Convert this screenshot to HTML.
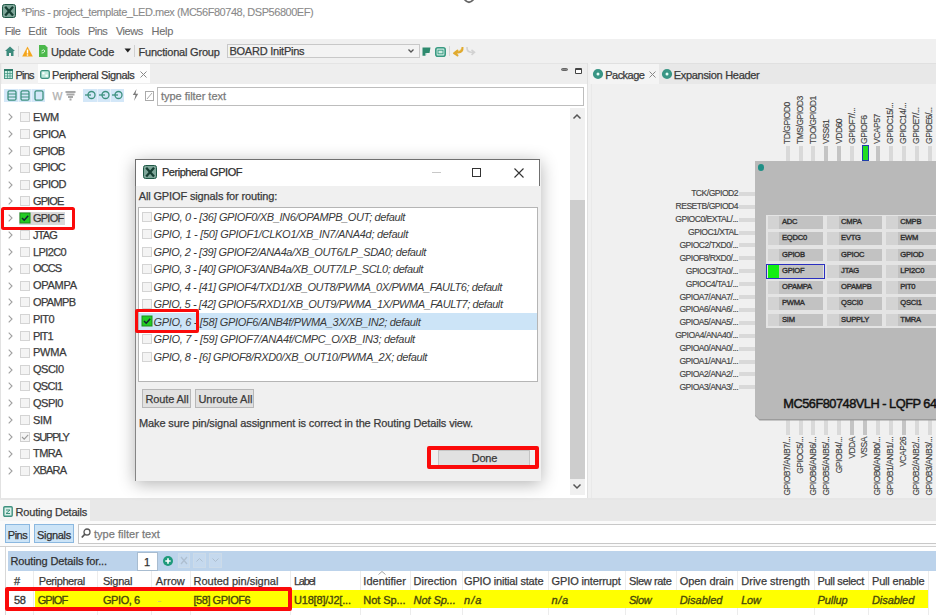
<!DOCTYPE html><html><head><meta charset="utf-8"><style>
*{margin:0;padding:0;box-sizing:border-box}
html,body{width:936px;height:615px;overflow:hidden;background:#fff;position:relative;font-family:"Liberation Sans",sans-serif}
.t{position:absolute;white-space:pre;-webkit-text-stroke:0.25px currentColor}
.r{position:absolute}
.i{font-style:italic;-webkit-text-stroke-width:0}
svg{position:absolute;overflow:visible}
</style></head><body><div class="r" style="left:0px;top:0px;width:936px;height:22px;background:#fff"></div>
<div class="r" style="left:2px;top:4px;width:14.2px;height:14.2px;background:#7ea699;border:1.8px solid #1f5846;border-radius:2.5px"></div>
<svg style="left:2px;top:4px" width="14" height="14"><path d="M3.2 2.8 L11 11.4 M11 2.8 L3.2 11.4" stroke="#173f33" stroke-width="2.3"/></svg>
<div class="t " style="left:21.2px;top:6.59px;font-size:11.0px;line-height:11.0px;color:#8a8a8a;letter-spacing:-0.466px;-webkit-text-stroke-width:0.1px">*Pins - project_template_LED.mex (MC56F80748, DSP56800EF)</div>
<svg style="left:462px;top:-4px" width="14" height="8"><path d="M2.5 3.5 Q7 9 11.5 3.5" stroke="#666" stroke-width="1.8" fill="none"/></svg>
<div class="t " style="left:4.8px;top:26.09px;font-size:11.0px;line-height:11.0px;color:#6f6f6f;letter-spacing:-0.584px;-webkit-text-stroke-width:0.1px">File</div>
<div class="t " style="left:28.2px;top:26.09px;font-size:11.0px;line-height:11.0px;color:#6f6f6f;letter-spacing:-0.117px;-webkit-text-stroke-width:0.1px">Edit</div>
<div class="t " style="left:55.6px;top:26.09px;font-size:11.0px;line-height:11.0px;color:#6f6f6f;letter-spacing:-0.358px;-webkit-text-stroke-width:0.1px">Tools</div>
<div class="t " style="left:88.0px;top:26.09px;font-size:11.0px;line-height:11.0px;color:#6f6f6f;letter-spacing:-0.527px;-webkit-text-stroke-width:0.1px">Pins</div>
<div class="t " style="left:115.9px;top:26.09px;font-size:11.0px;line-height:11.0px;color:#6f6f6f;letter-spacing:-0.431px;-webkit-text-stroke-width:0.1px">Views</div>
<div class="t " style="left:151.5px;top:26.09px;font-size:11.0px;line-height:11.0px;color:#6f6f6f;letter-spacing:-0.256px;-webkit-text-stroke-width:0.1px">Help</div>
<div class="r" style="left:0px;top:39px;width:936px;height:24px;background:#f0f0f0"></div>
<svg style="left:5px;top:46px" width="10" height="10"><path d="M0 5 L5 0.5 L10 5 L8.5 5 L8.5 10 L6 10 L6 7 L4 7 L4 10 L1.5 10 L1.5 5 Z" fill="#3d8b7d"/></svg>
<div class="r" style="left:18px;top:46px;width:1px;height:11px;background:#d8d8d8"></div>
<svg style="left:22px;top:46px" width="11" height="11"><path d="M5.5 0.5 L10.8 10.5 L0.2 10.5 Z" fill="#f4a51c"/><rect x="4.8" y="3.5" width="1.4" height="4" fill="#fff"/><rect x="4.8" y="8.3" width="1.4" height="1.4" fill="#fff"/></svg>
<svg style="left:39px;top:45px" width="9" height="12"><path d="M0 0 L6 0 L8.5 2.5 L8.5 12 L0 12 Z" fill="#4cb84c"/><path d="M2.5 6 Q4.5 3.5 6 6 Q4.5 8.5 2.5 8" stroke="#d8f5d8" stroke-width="1" fill="none"/></svg>
<div class="t " style="left:51.0px;top:47.09px;font-size:11.0px;line-height:11.0px;color:#3a3a3a;letter-spacing:-0.139px;">Update Code</div>
<svg style="left:124px;top:48px" width="8" height="6"><path d="M0.5 0.5 L7 0.5 L3.75 4.5 Z" fill="#222"/></svg>
<div class="r" style="left:134px;top:45px;width:1px;height:12px;background:#d0d0d0"></div>
<div class="t " style="left:138.5px;top:47.09px;font-size:11.0px;line-height:11.0px;color:#3a3a3a;letter-spacing:-0.199px;">Functional Group</div>
<div class="r" style="left:226.5px;top:44px;width:193px;height:14px;background:#f3f3f3;border:1px solid #c8c8c8"></div>
<div class="t " style="left:229.4px;top:46.39px;font-size:11.0px;line-height:11.0px;color:#3a3a3a;letter-spacing:-0.232px;">BOARD InitPins</div>
<svg style="left:408px;top:49px" width="6" height="4"><path d="M0.5 0.5 L3 3 L5.5 0.5" stroke="#555" stroke-width="1.3" fill="none"/></svg>
<svg style="left:422px;top:47px" width="9" height="9"><path d="M0.5 0.5 H8.5 L7.5 6 H3.5 V8.8 H0.5 Z" fill="#2e8a6e"/><path d="M3.6 7.8 L5 6.5" stroke="#9cc" stroke-width="0.8"/></svg>
<svg style="left:435px;top:46.5px" width="11" height="10"><rect x="0.8" y="0.8" width="9.4" height="8.4" rx="2" fill="#cdebe2" stroke="#3a9a82" stroke-width="1.6"/><rect x="3" y="3.2" width="5" height="3.6" fill="none" stroke="#3a9a82" stroke-width="0.9"/></svg>
<div class="r" style="left:449px;top:46px;width:1px;height:10px;background:#d8d8d8"></div>
<svg style="left:453px;top:46px" width="11" height="10"><path d="M9.5 1 Q10 6 5 6.5 L3 6.5 L4.5 4.5 L1 7.2 L4.5 9.5 L3 7.8" stroke="#e0aa30" stroke-width="2" fill="#f5d78a" stroke-linejoin="round"/></svg>
<svg style="left:466px;top:46px" width="10" height="10"><path d="M1 1 Q0.8 6 5 6.2 L7.5 6.2 M5.5 3.8 L8.5 6.2 L5.5 8.8" stroke="#d2d2d2" stroke-width="1.6" fill="none"/></svg>
<div class="r" style="left:0px;top:63px;width:588px;height:435px;background:#fff"></div>
<div class="r" style="left:0px;top:63px;width:588px;height:21px;background:#eeeeee"></div>
<div class="r" style="left:1.5px;top:64px;width:36px;height:19.5px;background:#f2f2f2"></div>
<div class="r" style="left:0px;top:63px;width:588px;height:1px;background:#e4e4e4"></div>
<div class="r" style="left:0px;top:63px;width:1px;height:435px;background:#e2e2e2"></div>
<div class="r" style="left:587px;top:63px;width:1px;height:435px;background:#e0e0e0"></div>
<div class="r" style="left:37.5px;top:63.8px;width:112.6px;height:19.5px;background:#fdfdfd"></div>
<svg style="left:4px;top:69px" width="9" height="10"><rect x="0.5" y="0.5" width="8" height="9" fill="#c9eee2" stroke="#3e917f" stroke-width="0.9"/><rect x="0" y="0" width="9" height="2" fill="#2f7d6b"/><path d="M0.5 4.5 H8.5 M0.5 7 H8.5 M3.5 2 V9.5 M6 2 V9.5" stroke="#3e917f" stroke-width="0.7"/></svg>
<div class="t " style="left:15.4px;top:69.69px;font-size:11.0px;line-height:11.0px;color:#3a3a3a;letter-spacing:-0.752px;">Pins</div>
<svg style="left:40px;top:69.5px" width="10" height="9"><rect x="0.7" y="0.7" width="8.6" height="7.6" rx="1.5" fill="#bfeadd" stroke="#3e917f" stroke-width="1.3"/><rect x="2.3" y="2.3" width="2.2" height="2" fill="#fff"/><rect x="5.5" y="4.6" width="2.2" height="2" fill="#fff"/></svg>
<div class="t " style="left:52.0px;top:69.69px;font-size:11.0px;line-height:11.0px;color:#3a3a3a;letter-spacing:-0.377px;">Peripheral Signals</div>
<svg style="left:139.5px;top:70.5px" width="7" height="7"><path d="M0.5 0.5 L6.5 6.5 M6.5 0.5 L0.5 6.5" stroke="#888" stroke-width="1"/></svg>
<div class="r" style="left:561px;top:67.6px;width:7px;height:3.2px;background:#888;border:1px solid #666;border-radius:2px"></div>
<div class="r" style="left:575.2px;top:67.6px;width:6.8px;height:6.4px;background:#fff;border:1.3px solid #444;border-top-width:2.2px;border-radius:1px"></div>
<div class="r" style="left:4px;top:88.5px;width:41px;height:13px;background:#d3e7f8"></div>
<div class="r" style="left:17.7px;top:88.5px;width:0.8px;height:13px;background:#e8f2fb"></div>
<div class="r" style="left:31.4px;top:88.5px;width:0.8px;height:13px;background:#e8f2fb"></div>
<svg style="left:6.5px;top:89.5px" width="10" height="11"><rect x="1" y="0.8" width="8" height="9.4" rx="1.5" fill="none" stroke="#3e917f" stroke-width="1.3"/><path d="M1 4 H9 M1 7 H9" stroke="#3e917f" stroke-width="1"/></svg>
<svg style="left:20.2px;top:89.5px" width="10" height="11"><rect x="1" y="0.8" width="8" height="9.4" rx="1.5" fill="none" stroke="#3e917f" stroke-width="1.3"/><path d="M1 4 H9 M1 7 H9" stroke="#3e917f" stroke-width="1"/></svg>
<svg style="left:33.9px;top:89.5px" width="10" height="11"><rect x="1" y="0.8" width="8" height="9.4" rx="1.5" fill="none" stroke="#3e917f" stroke-width="1.3"/></svg>
<div class="t " style="left:52.5px;top:91.11px;font-size:10.5px;line-height:10.5px;color:#b0b0b0;">W</div>
<svg style="left:65px;top:91px" width="11" height="10"><path d="M0.5 1 H10.5 M1.5 3.5 H9.5 M3 6 H8 M4.5 8.5 H6.5" stroke="#a8a8a8" stroke-width="1.8"/></svg>
<div class="r" style="left:83px;top:88.5px;width:41px;height:13px;background:#d3e7f8"></div>
<div class="r" style="left:96.7px;top:88.5px;width:0.8px;height:13px;background:#e8f2fb"></div>
<div class="r" style="left:110.4px;top:88.5px;width:0.8px;height:13px;background:#e8f2fb"></div>
<svg style="left:85.0px;top:90px" width="12" height="10"><circle cx="6.5" cy="5" r="3.5" fill="none" stroke="#3e917f" stroke-width="1.3"/><path d="M0 5 H6" stroke="#3e917f" stroke-width="1.3"/></svg>
<svg style="left:98.7px;top:90px" width="12" height="10"><circle cx="6.5" cy="5" r="3.5" fill="none" stroke="#3e917f" stroke-width="1.3"/><path d="M0 5 H6" stroke="#3e917f" stroke-width="1.3"/></svg>
<svg style="left:112.4px;top:90px" width="12" height="10"><circle cx="6.5" cy="5" r="3.5" fill="none" stroke="#3e917f" stroke-width="1.3"/><path d="M0 5 H6" stroke="#3e917f" stroke-width="1.3"/></svg>
<svg style="left:132px;top:89px" width="7" height="12"><path d="M4.5 0 L0.8 6 L3.5 6 L2 12 L6.2 4.8 L3.5 4.8 Z" fill="#7d7d7d"/></svg>
<svg style="left:145px;top:89.5px" width="9" height="11"><rect x="0.5" y="1.5" width="8" height="9" fill="none" stroke="#aaa"/><path d="M2 9 L7 3" stroke="#aaa"/></svg>
<div class="r" style="left:157px;top:87px;width:427px;height:18.5px;background:#fff;border:1px solid #bdbdbd"></div>
<div class="t " style="left:161.0px;top:91.19px;font-size:11.0px;line-height:11.0px;color:#7a7a7a;letter-spacing:-0.026px;">type filter text</div>
<div class="r" style="left:569.5px;top:108px;width:15px;height:387px;background:#f0f0f0"></div>
<div class="r" style="left:569.5px;top:200px;width:15px;height:279px;background:#cdcdcd"></div>
<svg style="left:573px;top:114px" width="8" height="5"><path d="M0.5 4.5 L4 1 L7.5 4.5" stroke="#555" stroke-width="1.5" fill="none"/></svg>
<svg style="left:573px;top:484px" width="8" height="5"><path d="M0.5 0.5 L4 4 L7.5 0.5" stroke="#555" stroke-width="1.5" fill="none"/></svg>
<svg style="left:8px;top:113.3px" width="5" height="8"><path d="M0.7 0.7 L4 4 L0.7 7.3" stroke="#a0a0a0" stroke-width="1.1" fill="none"/></svg>
<div class="r" style="left:20px;top:112.3px;width:10px;height:10px;background:#f4f4f4;border:1px solid #d4d4d4"></div>
<div class="t " style="left:33.0px;top:111.99px;font-size:11.0px;line-height:11.0px;color:#3a3a3a;letter-spacing:-0.33px;">EWM</div>
<svg style="left:8px;top:130.1px" width="5" height="8"><path d="M0.7 0.7 L4 4 L0.7 7.3" stroke="#a0a0a0" stroke-width="1.1" fill="none"/></svg>
<div class="r" style="left:20px;top:129.1px;width:10px;height:10px;background:#f4f4f4;border:1px solid #d4d4d4"></div>
<div class="t " style="left:33.0px;top:128.81px;font-size:11.0px;line-height:11.0px;color:#3a3a3a;letter-spacing:-0.489px;">GPIOA</div>
<svg style="left:8px;top:146.9px" width="5" height="8"><path d="M0.7 0.7 L4 4 L0.7 7.3" stroke="#a0a0a0" stroke-width="1.1" fill="none"/></svg>
<div class="r" style="left:20px;top:145.9px;width:10px;height:10px;background:#f4f4f4;border:1px solid #d4d4d4"></div>
<div class="t " style="left:33.0px;top:145.63px;font-size:11.0px;line-height:11.0px;color:#3a3a3a;letter-spacing:-0.689px;">GPIOB</div>
<svg style="left:8px;top:163.8px" width="5" height="8"><path d="M0.7 0.7 L4 4 L0.7 7.3" stroke="#a0a0a0" stroke-width="1.1" fill="none"/></svg>
<div class="r" style="left:20px;top:162.8px;width:10px;height:10px;background:#f4f4f4;border:1px solid #d4d4d4"></div>
<div class="t " style="left:33.0px;top:162.45px;font-size:11.0px;line-height:11.0px;color:#3a3a3a;letter-spacing:-0.691px;">GPIOC</div>
<svg style="left:8px;top:180.6px" width="5" height="8"><path d="M0.7 0.7 L4 4 L0.7 7.3" stroke="#a0a0a0" stroke-width="1.1" fill="none"/></svg>
<div class="r" style="left:20px;top:179.6px;width:10px;height:10px;background:#f4f4f4;border:1px solid #d4d4d4"></div>
<div class="t " style="left:33.0px;top:179.27px;font-size:11.0px;line-height:11.0px;color:#3a3a3a;letter-spacing:-0.491px;">GPIOD</div>
<svg style="left:8px;top:197.4px" width="5" height="8"><path d="M0.7 0.7 L4 4 L0.7 7.3" stroke="#a0a0a0" stroke-width="1.1" fill="none"/></svg>
<div class="r" style="left:20px;top:196.4px;width:10px;height:10px;background:#f4f4f4;border:1px solid #d4d4d4"></div>
<div class="t " style="left:33.0px;top:196.09px;font-size:11.0px;line-height:11.0px;color:#3a3a3a;letter-spacing:-0.889px;">GPIOE</div>
<svg style="left:8px;top:214.2px" width="5" height="8"><path d="M0.7 0.7 L4 4 L0.7 7.3" stroke="#a0a0a0" stroke-width="1.1" fill="none"/></svg>
<div class="r" style="left:18.75px;top:212px;width:46.2px;height:13px;background:#d9d9d9"></div>
<svg style="left:19.7px;top:212.8px" width="10" height="10"><rect x="0" y="0" width="10" height="10" fill="#22cc22" stroke="#1a8f1a" stroke-width="1"/><path d="M2 5 L4.2 7.2 L8.2 2.8" stroke="#123" stroke-width="1.5" fill="none"/></svg>
<div class="t " style="left:33.0px;top:212.91px;font-size:11.0px;line-height:11.0px;color:#3a3a3a;letter-spacing:-0.767px;">GPIOF</div>
<svg style="left:8px;top:231.0px" width="5" height="8"><path d="M0.7 0.7 L4 4 L0.7 7.3" stroke="#a0a0a0" stroke-width="1.1" fill="none"/></svg>
<div class="r" style="left:20px;top:230.0px;width:10px;height:10px;background:#f4f4f4;border:1px solid #d4d4d4"></div>
<div class="t " style="left:33.0px;top:229.73px;font-size:11.0px;line-height:11.0px;color:#3a3a3a;letter-spacing:-0.849px;">JTAG</div>
<svg style="left:8px;top:247.9px" width="5" height="8"><path d="M0.7 0.7 L4 4 L0.7 7.3" stroke="#a0a0a0" stroke-width="1.1" fill="none"/></svg>
<div class="r" style="left:20px;top:246.9px;width:10px;height:10px;background:#f4f4f4;border:1px solid #d4d4d4"></div>
<div class="t " style="left:33.0px;top:246.55px;font-size:11.0px;line-height:11.0px;color:#3a3a3a;letter-spacing:-0.617px;">LPI2C0</div>
<svg style="left:8px;top:264.7px" width="5" height="8"><path d="M0.7 0.7 L4 4 L0.7 7.3" stroke="#a0a0a0" stroke-width="1.1" fill="none"/></svg>
<div class="r" style="left:20px;top:263.7px;width:10px;height:10px;background:#f4f4f4;border:1px solid #d4d4d4"></div>
<div class="t " style="left:33.0px;top:263.37px;font-size:11.0px;line-height:11.0px;color:#3a3a3a;letter-spacing:-0.92px;">OCCS</div>
<svg style="left:8px;top:281.5px" width="5" height="8"><path d="M0.7 0.7 L4 4 L0.7 7.3" stroke="#a0a0a0" stroke-width="1.1" fill="none"/></svg>
<div class="r" style="left:20px;top:280.5px;width:10px;height:10px;background:#f4f4f4;border:1px solid #d4d4d4"></div>
<div class="t " style="left:33.0px;top:280.19px;font-size:11.0px;line-height:11.0px;color:#3a3a3a;letter-spacing:-0.273px;">OPAMPA</div>
<svg style="left:8px;top:298.3px" width="5" height="8"><path d="M0.7 0.7 L4 4 L0.7 7.3" stroke="#a0a0a0" stroke-width="1.1" fill="none"/></svg>
<div class="r" style="left:20px;top:297.3px;width:10px;height:10px;background:#f4f4f4;border:1px solid #d4d4d4"></div>
<div class="t " style="left:33.0px;top:297.01px;font-size:11.0px;line-height:11.0px;color:#3a3a3a;letter-spacing:-0.628px;">OPAMPB</div>
<svg style="left:8px;top:315.1px" width="5" height="8"><path d="M0.7 0.7 L4 4 L0.7 7.3" stroke="#a0a0a0" stroke-width="1.1" fill="none"/></svg>
<div class="r" style="left:20px;top:314.1px;width:10px;height:10px;background:#f4f4f4;border:1px solid #d4d4d4"></div>
<div class="t " style="left:33.0px;top:313.83px;font-size:11.0px;line-height:11.0px;color:#3a3a3a;letter-spacing:-0.559px;">PIT0</div>
<svg style="left:8px;top:332.0px" width="5" height="8"><path d="M0.7 0.7 L4 4 L0.7 7.3" stroke="#a0a0a0" stroke-width="1.1" fill="none"/></svg>
<div class="r" style="left:20px;top:331.0px;width:10px;height:10px;background:#f4f4f4;border:1px solid #d4d4d4"></div>
<div class="t " style="left:33.0px;top:330.65px;font-size:11.0px;line-height:11.0px;color:#3a3a3a;letter-spacing:-0.909px;">PIT1</div>
<svg style="left:8px;top:348.8px" width="5" height="8"><path d="M0.7 0.7 L4 4 L0.7 7.3" stroke="#a0a0a0" stroke-width="1.1" fill="none"/></svg>
<div class="r" style="left:20px;top:347.8px;width:10px;height:10px;background:#f4f4f4;border:1px solid #d4d4d4"></div>
<div class="t " style="left:33.0px;top:347.47px;font-size:11.0px;line-height:11.0px;color:#3a3a3a;letter-spacing:-0.234px;">PWMA</div>
<svg style="left:8px;top:365.6px" width="5" height="8"><path d="M0.7 0.7 L4 4 L0.7 7.3" stroke="#a0a0a0" stroke-width="1.1" fill="none"/></svg>
<div class="r" style="left:20px;top:364.6px;width:10px;height:10px;background:#f4f4f4;border:1px solid #d4d4d4"></div>
<div class="t " style="left:33.0px;top:364.29px;font-size:11.0px;line-height:11.0px;color:#3a3a3a;letter-spacing:-0.503px;">QSCI0</div>
<svg style="left:8px;top:382.4px" width="5" height="8"><path d="M0.7 0.7 L4 4 L0.7 7.3" stroke="#a0a0a0" stroke-width="1.1" fill="none"/></svg>
<div class="r" style="left:20px;top:381.4px;width:10px;height:10px;background:#f4f4f4;border:1px solid #d4d4d4"></div>
<div class="t " style="left:33.0px;top:381.11px;font-size:11.0px;line-height:11.0px;color:#3a3a3a;letter-spacing:-0.703px;">QSCI1</div>
<svg style="left:8px;top:399.2px" width="5" height="8"><path d="M0.7 0.7 L4 4 L0.7 7.3" stroke="#a0a0a0" stroke-width="1.1" fill="none"/></svg>
<div class="r" style="left:20px;top:398.2px;width:10px;height:10px;background:#f4f4f4;border:1px solid #d4d4d4"></div>
<div class="t " style="left:33.0px;top:397.93px;font-size:11.0px;line-height:11.0px;color:#3a3a3a;letter-spacing:-0.501px;">QSPI0</div>
<svg style="left:8px;top:416.1px" width="5" height="8"><path d="M0.7 0.7 L4 4 L0.7 7.3" stroke="#a0a0a0" stroke-width="1.1" fill="none"/></svg>
<div class="r" style="left:20px;top:415.1px;width:10px;height:10px;background:#f4f4f4;border:1px solid #d4d4d4"></div>
<div class="t " style="left:33.0px;top:414.75px;font-size:11.0px;line-height:11.0px;color:#3a3a3a;letter-spacing:-0.354px;">SIM</div>
<svg style="left:8px;top:432.9px" width="5" height="8"><path d="M0.7 0.7 L4 4 L0.7 7.3" stroke="#a0a0a0" stroke-width="1.1" fill="none"/></svg>
<svg style="left:20px;top:431.9px" width="10" height="10"><rect x="0.5" y="0.5" width="9" height="9" fill="#f4f4f4" stroke="#cfcfcf"/><path d="M2 5 L4.2 7.2 L8.2 2.8" stroke="#9a9a9a" stroke-width="1.1" fill="none"/></svg>
<div class="t " style="left:33.0px;top:431.57px;font-size:11.0px;line-height:11.0px;color:#3a3a3a;letter-spacing:-1.149px;">SUPPLY</div>
<svg style="left:8px;top:449.7px" width="5" height="8"><path d="M0.7 0.7 L4 4 L0.7 7.3" stroke="#a0a0a0" stroke-width="1.1" fill="none"/></svg>
<div class="r" style="left:20px;top:448.7px;width:10px;height:10px;background:#f4f4f4;border:1px solid #d4d4d4"></div>
<div class="t " style="left:33.0px;top:448.39px;font-size:11.0px;line-height:11.0px;color:#3a3a3a;letter-spacing:-0.593px;">TMRA</div>
<svg style="left:8px;top:466.5px" width="5" height="8"><path d="M0.7 0.7 L4 4 L0.7 7.3" stroke="#a0a0a0" stroke-width="1.1" fill="none"/></svg>
<div class="r" style="left:20px;top:465.5px;width:10px;height:10px;background:#f4f4f4;border:1px solid #d4d4d4"></div>
<div class="t " style="left:33.0px;top:465.21px;font-size:11.0px;line-height:11.0px;color:#3a3a3a;letter-spacing:-0.799px;">XBARA</div>
<div class="r" style="left:1.2px;top:206.8px;width:73.6px;height:22.8px;border:3.7px solid #fb0a0a;border-radius:2.5px"></div>
<div class="r" style="left:588px;top:63px;width:348px;height:435px;background:#f0f0f0"></div>
<div class="r" style="left:588px;top:63px;width:3px;height:435px;background:#f0f0f0"></div>
<div class="r" style="left:591px;top:63px;width:1px;height:435px;background:#e9e9e9"></div>
<div class="r" style="left:591px;top:63px;width:345px;height:21px;background:#e8e8e8"></div>
<div class="r" style="left:591px;top:63px;width:345px;height:1px;background:#e0e0e0"></div>
<div class="r" style="left:590.3px;top:64px;width:68.5px;height:20px;background:#f4f4f4"></div>
<svg style="left:593px;top:69px" width="10" height="10"><circle cx="5" cy="5" r="3.3" fill="#e6fff8" stroke="#3a9685" stroke-width="3.6"/></svg>
<svg style="left:662px;top:69px" width="10" height="10"><circle cx="5" cy="5" r="3.3" fill="#e6fff8" stroke="#3a9685" stroke-width="3.6"/></svg>
<div class="t " style="left:605.3px;top:70.09px;font-size:11.0px;line-height:11.0px;color:#3a3a3a;letter-spacing:-0.545px;">Package</div>
<svg style="left:649px;top:71px" width="7" height="7"><path d="M0.5 0.5 L6.5 6.5 M6.5 0.5 L0.5 6.5" stroke="#888" stroke-width="1"/></svg>
<div class="t " style="left:673.7px;top:70.09px;font-size:11.0px;line-height:11.0px;color:#3a3a3a;letter-spacing:-0.295px;">Expansion Header</div>
<div class="r" style="left:785.5px;top:146px;width:4px;height:15px;background:#d9d9d9"></div>
<div class="t" style="left:782.7px;top:144px;transform-origin:0 0;transform:rotate(-90deg);font-size:8.6px;line-height:9px;color:#444;letter-spacing:-0.52px;-webkit-text-stroke:0.15px #444;">TD/GPIOD0</div>
<div class="r" style="left:798.5px;top:146px;width:4px;height:15px;background:#d9d9d9"></div>
<div class="t" style="left:795.7px;top:144px;transform-origin:0 0;transform:rotate(-90deg);font-size:8.6px;line-height:9px;color:#444;letter-spacing:-0.52px;-webkit-text-stroke:0.15px #444;">TMS/GPIOD3</div>
<div class="r" style="left:811.4px;top:146px;width:4px;height:15px;background:#d9d9d9"></div>
<div class="t" style="left:808.6px;top:144px;transform-origin:0 0;transform:rotate(-90deg);font-size:8.6px;line-height:9px;color:#444;letter-spacing:-0.52px;-webkit-text-stroke:0.15px #444;">TDO/GPIOD1</div>
<div class="r" style="left:824.4px;top:146px;width:4px;height:15px;background:#c4c4c4"></div>
<div class="t" style="left:821.6px;top:144px;transform-origin:0 0;transform:rotate(-90deg);font-size:8.6px;line-height:9px;color:#444;letter-spacing:-0.52px;-webkit-text-stroke:0.15px #444;">VSS61</div>
<div class="r" style="left:837.3px;top:146px;width:4px;height:15px;background:#c4c4c4"></div>
<div class="t" style="left:834.5px;top:144px;transform-origin:0 0;transform:rotate(-90deg);font-size:8.6px;line-height:9px;color:#444;letter-spacing:-0.52px;-webkit-text-stroke:0.15px #444;">VDD60</div>
<div class="r" style="left:850.2px;top:146px;width:4px;height:15px;background:#d9d9d9"></div>
<div class="t" style="left:847.5px;top:144px;transform-origin:0 0;transform:rotate(-90deg);font-size:8.6px;line-height:9px;color:#444;letter-spacing:-0.52px;-webkit-text-stroke:0.15px #444;">GPIOF7/...</div>
<div class="r" style="left:861.7px;top:145px;width:7px;height:16px;background:#22dd22;border:1.5px solid #1f3faa"></div>
<div class="t" style="left:860.4px;top:144px;transform-origin:0 0;transform:rotate(-90deg);font-size:8.6px;line-height:9px;color:#444;letter-spacing:-0.52px;-webkit-text-stroke:0.15px #444;">GPIOF6</div>
<div class="r" style="left:876.1px;top:146px;width:4px;height:15px;background:#c4c4c4"></div>
<div class="t" style="left:873.4px;top:144px;transform-origin:0 0;transform:rotate(-90deg);font-size:8.6px;line-height:9px;color:#444;letter-spacing:-0.52px;-webkit-text-stroke:0.15px #444;">VCAP57</div>
<div class="r" style="left:889.1px;top:146px;width:4px;height:15px;background:#d9d9d9"></div>
<div class="t" style="left:886.3px;top:144px;transform-origin:0 0;transform:rotate(-90deg);font-size:8.6px;line-height:9px;color:#444;letter-spacing:-0.52px;-webkit-text-stroke:0.15px #444;">GPIOC15/...</div>
<div class="r" style="left:902.0px;top:146px;width:4px;height:15px;background:#d9d9d9"></div>
<div class="t" style="left:899.2px;top:144px;transform-origin:0 0;transform:rotate(-90deg);font-size:8.6px;line-height:9px;color:#444;letter-spacing:-0.52px;-webkit-text-stroke:0.15px #444;">GPIOC14/...</div>
<div class="r" style="left:915.0px;top:146px;width:4px;height:15px;background:#d9d9d9"></div>
<div class="t" style="left:912.2px;top:144px;transform-origin:0 0;transform:rotate(-90deg);font-size:8.6px;line-height:9px;color:#444;letter-spacing:-0.52px;-webkit-text-stroke:0.15px #444;">GPIOE7/...</div>
<div class="r" style="left:928.0px;top:146px;width:4px;height:15px;background:#d9d9d9"></div>
<div class="t" style="left:925.2px;top:144px;transform-origin:0 0;transform:rotate(-90deg);font-size:8.6px;line-height:9px;color:#444;letter-spacing:-0.52px;-webkit-text-stroke:0.15px #444;">GPIOE6/...</div>
<div class="r" style="left:785.5px;top:419px;width:4px;height:16px;background:#d9d9d9"></div>
<div class="t" style="left:782.7px;top:437px;transform-origin:0 0;transform:translateX(0) rotate(-90deg) translateX(-100%);font-size:8.6px;line-height:9px;color:#444;letter-spacing:-0.52px;-webkit-text-stroke:0.15px #444;">GPIOB7/ANB7/...</div>
<div class="r" style="left:798.5px;top:419px;width:4px;height:16px;background:#d9d9d9"></div>
<div class="t" style="left:795.7px;top:437px;transform-origin:0 0;transform:translateX(0) rotate(-90deg) translateX(-100%);font-size:8.6px;line-height:9px;color:#444;letter-spacing:-0.52px;-webkit-text-stroke:0.15px #444;">GPIOC5/...</div>
<div class="r" style="left:811.4px;top:419px;width:4px;height:16px;background:#d9d9d9"></div>
<div class="t" style="left:808.6px;top:437px;transform-origin:0 0;transform:translateX(0) rotate(-90deg) translateX(-100%);font-size:8.6px;line-height:9px;color:#444;letter-spacing:-0.52px;-webkit-text-stroke:0.15px #444;">GPIOB6/ANB6/...</div>
<div class="r" style="left:824.4px;top:419px;width:4px;height:16px;background:#d9d9d9"></div>
<div class="t" style="left:821.6px;top:437px;transform-origin:0 0;transform:translateX(0) rotate(-90deg) translateX(-100%);font-size:8.6px;line-height:9px;color:#444;letter-spacing:-0.52px;-webkit-text-stroke:0.15px #444;">GPIOB5/ANB5/...</div>
<div class="r" style="left:837.3px;top:419px;width:4px;height:16px;background:#d9d9d9"></div>
<div class="t" style="left:834.5px;top:437px;transform-origin:0 0;transform:translateX(0) rotate(-90deg) translateX(-100%);font-size:8.6px;line-height:9px;color:#444;letter-spacing:-0.52px;-webkit-text-stroke:0.15px #444;">GPIOB4/...</div>
<div class="r" style="left:850.2px;top:419px;width:4px;height:16px;background:#c4c4c4"></div>
<div class="t" style="left:847.5px;top:437px;transform-origin:0 0;transform:translateX(0) rotate(-90deg) translateX(-100%);font-size:8.6px;line-height:9px;color:#444;letter-spacing:-0.52px;-webkit-text-stroke:0.15px #444;">VDDA</div>
<div class="r" style="left:863.2px;top:419px;width:4px;height:16px;background:#c4c4c4"></div>
<div class="t" style="left:860.4px;top:437px;transform-origin:0 0;transform:translateX(0) rotate(-90deg) translateX(-100%);font-size:8.6px;line-height:9px;color:#444;letter-spacing:-0.52px;-webkit-text-stroke:0.15px #444;">VSSA</div>
<div class="r" style="left:876.1px;top:419px;width:4px;height:16px;background:#d9d9d9"></div>
<div class="t" style="left:873.4px;top:437px;transform-origin:0 0;transform:translateX(0) rotate(-90deg) translateX(-100%);font-size:8.6px;line-height:9px;color:#444;letter-spacing:-0.52px;-webkit-text-stroke:0.15px #444;">GPIOB0/ANB0/...</div>
<div class="r" style="left:889.1px;top:419px;width:4px;height:16px;background:#d9d9d9"></div>
<div class="t" style="left:886.3px;top:437px;transform-origin:0 0;transform:translateX(0) rotate(-90deg) translateX(-100%);font-size:8.6px;line-height:9px;color:#444;letter-spacing:-0.52px;-webkit-text-stroke:0.15px #444;">GPIOB1/ANB1/...</div>
<div class="r" style="left:902.0px;top:419px;width:4px;height:16px;background:#c4c4c4"></div>
<div class="t" style="left:899.2px;top:437px;transform-origin:0 0;transform:translateX(0) rotate(-90deg) translateX(-100%);font-size:8.6px;line-height:9px;color:#444;letter-spacing:-0.52px;-webkit-text-stroke:0.15px #444;">VCAP26</div>
<div class="r" style="left:915.0px;top:419px;width:4px;height:16px;background:#d9d9d9"></div>
<div class="t" style="left:912.2px;top:437px;transform-origin:0 0;transform:translateX(0) rotate(-90deg) translateX(-100%);font-size:8.6px;line-height:9px;color:#444;letter-spacing:-0.52px;-webkit-text-stroke:0.15px #444;">GPIOB2/ANB2/...</div>
<div class="r" style="left:928.0px;top:419px;width:4px;height:16px;background:#d9d9d9"></div>
<div class="t" style="left:925.2px;top:437px;transform-origin:0 0;transform:translateX(0) rotate(-90deg) translateX(-100%);font-size:8.6px;line-height:9px;color:#444;letter-spacing:-0.52px;-webkit-text-stroke:0.15px #444;">GPIOB3/ANB3/...</div>
<div class="r" style="left:739px;top:191.8px;width:16px;height:4px;background:#d9d9d9"></div>
<div class="t" style="right:198px;top:189.3px;font-size:8.6px;line-height:9px;color:#444;letter-spacing:-0.52px;-webkit-text-stroke:0.15px #444;">TCK/GPIOD2</div>
<div class="r" style="left:739px;top:204.7px;width:16px;height:4px;background:#d9d9d9"></div>
<div class="t" style="right:198px;top:202.2px;font-size:8.6px;line-height:9px;color:#444;letter-spacing:-0.52px;-webkit-text-stroke:0.15px #444;">RESETB/GPIOD4</div>
<div class="r" style="left:739px;top:217.6px;width:16px;height:4px;background:#d9d9d9"></div>
<div class="t" style="right:198px;top:215.1px;font-size:8.6px;line-height:9px;color:#444;letter-spacing:-0.52px;-webkit-text-stroke:0.15px #444;">GPIOC0/EXTAL/...</div>
<div class="r" style="left:739px;top:230.5px;width:16px;height:4px;background:#d9d9d9"></div>
<div class="t" style="right:198px;top:228.0px;font-size:8.6px;line-height:9px;color:#444;letter-spacing:-0.52px;-webkit-text-stroke:0.15px #444;">GPIOC1/XTAL</div>
<div class="r" style="left:739px;top:243.4px;width:16px;height:4px;background:#d9d9d9"></div>
<div class="t" style="right:198px;top:240.9px;font-size:8.6px;line-height:9px;color:#444;letter-spacing:-0.52px;-webkit-text-stroke:0.15px #444;">GPIOC2/TXD0/...</div>
<div class="r" style="left:739px;top:256.3px;width:16px;height:4px;background:#d9d9d9"></div>
<div class="t" style="right:198px;top:253.8px;font-size:8.6px;line-height:9px;color:#444;letter-spacing:-0.52px;-webkit-text-stroke:0.15px #444;">GPIOF8/RXD0/...</div>
<div class="r" style="left:739px;top:269.2px;width:16px;height:4px;background:#d9d9d9"></div>
<div class="t" style="right:198px;top:266.7px;font-size:8.6px;line-height:9px;color:#444;letter-spacing:-0.52px;-webkit-text-stroke:0.15px #444;">GPIOC3/TA0/...</div>
<div class="r" style="left:739px;top:282.1px;width:16px;height:4px;background:#d9d9d9"></div>
<div class="t" style="right:198px;top:279.6px;font-size:8.6px;line-height:9px;color:#444;letter-spacing:-0.52px;-webkit-text-stroke:0.15px #444;">GPIOC4/TA1/...</div>
<div class="r" style="left:739px;top:295.0px;width:16px;height:4px;background:#d9d9d9"></div>
<div class="t" style="right:198px;top:292.5px;font-size:8.6px;line-height:9px;color:#444;letter-spacing:-0.52px;-webkit-text-stroke:0.15px #444;">GPIOA7/ANA7/...</div>
<div class="r" style="left:739px;top:307.9px;width:16px;height:4px;background:#d9d9d9"></div>
<div class="t" style="right:198px;top:305.4px;font-size:8.6px;line-height:9px;color:#444;letter-spacing:-0.52px;-webkit-text-stroke:0.15px #444;">GPIOA6/ANA6/...</div>
<div class="r" style="left:739px;top:320.8px;width:16px;height:4px;background:#d9d9d9"></div>
<div class="t" style="right:198px;top:318.3px;font-size:8.6px;line-height:9px;color:#444;letter-spacing:-0.52px;-webkit-text-stroke:0.15px #444;">GPIOA5/ANA5/...</div>
<div class="r" style="left:739px;top:333.7px;width:16px;height:4px;background:#d9d9d9"></div>
<div class="t" style="right:198px;top:331.2px;font-size:8.6px;line-height:9px;color:#444;letter-spacing:-0.52px;-webkit-text-stroke:0.15px #444;">GPIOA4/ANA40/...</div>
<div class="r" style="left:739px;top:346.6px;width:16px;height:4px;background:#d9d9d9"></div>
<div class="t" style="right:198px;top:344.1px;font-size:8.6px;line-height:9px;color:#444;letter-spacing:-0.52px;-webkit-text-stroke:0.15px #444;">GPIOA0/ANA0/...</div>
<div class="r" style="left:739px;top:359.5px;width:16px;height:4px;background:#d9d9d9"></div>
<div class="t" style="right:198px;top:357.0px;font-size:8.6px;line-height:9px;color:#444;letter-spacing:-0.52px;-webkit-text-stroke:0.15px #444;">GPIOA1/ANA1/...</div>
<div class="r" style="left:739px;top:372.4px;width:16px;height:4px;background:#d9d9d9"></div>
<div class="t" style="right:198px;top:369.9px;font-size:8.6px;line-height:9px;color:#444;letter-spacing:-0.52px;-webkit-text-stroke:0.15px #444;">GPIOA2/ANA2/...</div>
<div class="r" style="left:739px;top:385.3px;width:16px;height:4px;background:#d9d9d9"></div>
<div class="t" style="right:198px;top:382.8px;font-size:8.6px;line-height:9px;color:#444;letter-spacing:-0.52px;-webkit-text-stroke:0.15px #444;">GPIOA3/ANA3/...</div>
<div class="r" style="left:755px;top:161px;width:181px;height:259.5px;background:#9c9c9c;clip-path:polygon(0 0,100% 0,100% 100%,4.5px 100%,0 calc(100% - 4.5px))"></div>
<div class="r" style="left:755px;top:161px;width:181px;height:258px;background:#b9b9b9;clip-path:polygon(0 0,100% 0,100% 100%,4px 100%,0 calc(100% - 4px))"></div>
<div class="r" style="left:757.8px;top:164.2px;width:6.6px;height:6.6px;border-radius:50%;background:#1f8f86"></div>
<div class="r" style="left:765.5px;top:214.5px;width:171px;height:113.5px;background:#e4e4e4"></div>
<div class="r" style="left:767.6px;top:216.2px;width:55.6px;height:12.8px;background:#c2c2c2"></div>
<div class="r" style="left:767.6px;top:216.2px;width:11.8px;height:12.8px;background:#d3d3d3"></div>
<div class="t " style="left:782.0px;top:218.17px;font-size:7.6px;line-height:7.6px;color:#2e2e2e;letter-spacing:-0.25px;-webkit-text-stroke:0.35px #2e2e2e">ADC</div>
<div class="r" style="left:826.8px;top:216.2px;width:55.6px;height:12.8px;background:#c2c2c2"></div>
<div class="r" style="left:826.8px;top:216.2px;width:11.8px;height:12.8px;background:#d3d3d3"></div>
<div class="t " style="left:841.1px;top:218.17px;font-size:7.6px;line-height:7.6px;color:#2e2e2e;letter-spacing:-0.25px;-webkit-text-stroke:0.35px #2e2e2e">CMPA</div>
<div class="r" style="left:885.9px;top:216.2px;width:55.6px;height:12.8px;background:#c2c2c2"></div>
<div class="r" style="left:885.9px;top:216.2px;width:11.8px;height:12.8px;background:#d3d3d3"></div>
<div class="t " style="left:900.3px;top:218.17px;font-size:7.6px;line-height:7.6px;color:#2e2e2e;letter-spacing:-0.25px;-webkit-text-stroke:0.35px #2e2e2e">CMPB</div>
<div class="r" style="left:767.6px;top:232.45px;width:55.6px;height:12.8px;background:#c2c2c2"></div>
<div class="r" style="left:767.6px;top:232.45px;width:11.8px;height:12.8px;background:#d3d3d3"></div>
<div class="t " style="left:782.0px;top:234.42px;font-size:7.6px;line-height:7.6px;color:#2e2e2e;letter-spacing:-0.25px;-webkit-text-stroke:0.35px #2e2e2e">EQDC0</div>
<div class="r" style="left:826.8px;top:232.45px;width:55.6px;height:12.8px;background:#c2c2c2"></div>
<div class="r" style="left:826.8px;top:232.45px;width:11.8px;height:12.8px;background:#d3d3d3"></div>
<div class="t " style="left:841.1px;top:234.42px;font-size:7.6px;line-height:7.6px;color:#2e2e2e;letter-spacing:-0.25px;-webkit-text-stroke:0.35px #2e2e2e">EVTG</div>
<div class="r" style="left:885.9px;top:232.45px;width:55.6px;height:12.8px;background:#c2c2c2"></div>
<div class="r" style="left:885.9px;top:232.45px;width:11.8px;height:12.8px;background:#d3d3d3"></div>
<div class="t " style="left:900.3px;top:234.42px;font-size:7.6px;line-height:7.6px;color:#2e2e2e;letter-spacing:-0.25px;-webkit-text-stroke:0.35px #2e2e2e">EWM</div>
<div class="r" style="left:767.6px;top:248.7px;width:55.6px;height:12.8px;background:#c2c2c2"></div>
<div class="r" style="left:767.6px;top:248.7px;width:11.8px;height:12.8px;background:#d3d3d3"></div>
<div class="t " style="left:782.0px;top:250.67px;font-size:7.6px;line-height:7.6px;color:#2e2e2e;letter-spacing:-0.25px;-webkit-text-stroke:0.35px #2e2e2e">GPIOB</div>
<div class="r" style="left:826.8px;top:248.7px;width:55.6px;height:12.8px;background:#c2c2c2"></div>
<div class="r" style="left:826.8px;top:248.7px;width:11.8px;height:12.8px;background:#d3d3d3"></div>
<div class="t " style="left:841.1px;top:250.67px;font-size:7.6px;line-height:7.6px;color:#2e2e2e;letter-spacing:-0.25px;-webkit-text-stroke:0.35px #2e2e2e">GPIOC</div>
<div class="r" style="left:885.9px;top:248.7px;width:55.6px;height:12.8px;background:#c2c2c2"></div>
<div class="r" style="left:885.9px;top:248.7px;width:11.8px;height:12.8px;background:#d3d3d3"></div>
<div class="t " style="left:900.3px;top:250.67px;font-size:7.6px;line-height:7.6px;color:#2e2e2e;letter-spacing:-0.25px;-webkit-text-stroke:0.35px #2e2e2e">GPIOD</div>
<div class="r" style="left:767.6px;top:264.95px;width:55.6px;height:12.8px;background:#c2c2c2"></div>
<div class="r" style="left:766.2px;top:263.8px;width:58.4px;height:15.4px;border:1.6px solid #2a2fc0"></div>
<div class="r" style="left:767.6px;top:264.95px;width:11.8px;height:12.8px;background:#11ee11"></div>
<div class="t " style="left:782.0px;top:266.92px;font-size:7.6px;line-height:7.6px;color:#2e2e2e;letter-spacing:-0.25px;-webkit-text-stroke:0.35px #2e2e2e">GPIOF</div>
<div class="r" style="left:826.8px;top:264.95px;width:55.6px;height:12.8px;background:#c2c2c2"></div>
<div class="r" style="left:826.8px;top:264.95px;width:11.8px;height:12.8px;background:#d3d3d3"></div>
<div class="t " style="left:841.1px;top:266.92px;font-size:7.6px;line-height:7.6px;color:#2e2e2e;letter-spacing:-0.25px;-webkit-text-stroke:0.35px #2e2e2e">JTAG</div>
<div class="r" style="left:885.9px;top:264.95px;width:55.6px;height:12.8px;background:#c2c2c2"></div>
<div class="r" style="left:885.9px;top:264.95px;width:11.8px;height:12.8px;background:#d3d3d3"></div>
<div class="t " style="left:900.3px;top:266.92px;font-size:7.6px;line-height:7.6px;color:#2e2e2e;letter-spacing:-0.25px;-webkit-text-stroke:0.35px #2e2e2e">LPI2C0</div>
<div class="r" style="left:767.6px;top:281.2px;width:55.6px;height:12.8px;background:#c2c2c2"></div>
<div class="r" style="left:767.6px;top:281.2px;width:11.8px;height:12.8px;background:#d3d3d3"></div>
<div class="t " style="left:782.0px;top:283.17px;font-size:7.6px;line-height:7.6px;color:#2e2e2e;letter-spacing:-0.25px;-webkit-text-stroke:0.35px #2e2e2e">OPAMPA</div>
<div class="r" style="left:826.8px;top:281.2px;width:55.6px;height:12.8px;background:#c2c2c2"></div>
<div class="r" style="left:826.8px;top:281.2px;width:11.8px;height:12.8px;background:#d3d3d3"></div>
<div class="t " style="left:841.1px;top:283.17px;font-size:7.6px;line-height:7.6px;color:#2e2e2e;letter-spacing:-0.25px;-webkit-text-stroke:0.35px #2e2e2e">OPAMPB</div>
<div class="r" style="left:885.9px;top:281.2px;width:55.6px;height:12.8px;background:#c2c2c2"></div>
<div class="r" style="left:885.9px;top:281.2px;width:11.8px;height:12.8px;background:#d3d3d3"></div>
<div class="t " style="left:900.3px;top:283.17px;font-size:7.6px;line-height:7.6px;color:#2e2e2e;letter-spacing:-0.25px;-webkit-text-stroke:0.35px #2e2e2e">PIT0</div>
<div class="r" style="left:767.6px;top:297.45px;width:55.6px;height:12.8px;background:#c2c2c2"></div>
<div class="r" style="left:767.6px;top:297.45px;width:11.8px;height:12.8px;background:#d3d3d3"></div>
<div class="t " style="left:782.0px;top:299.42px;font-size:7.6px;line-height:7.6px;color:#2e2e2e;letter-spacing:-0.25px;-webkit-text-stroke:0.35px #2e2e2e">PWMA</div>
<div class="r" style="left:826.8px;top:297.45px;width:55.6px;height:12.8px;background:#c2c2c2"></div>
<div class="r" style="left:826.8px;top:297.45px;width:11.8px;height:12.8px;background:#d3d3d3"></div>
<div class="t " style="left:841.1px;top:299.42px;font-size:7.6px;line-height:7.6px;color:#2e2e2e;letter-spacing:-0.25px;-webkit-text-stroke:0.35px #2e2e2e">QSCI0</div>
<div class="r" style="left:885.9px;top:297.45px;width:55.6px;height:12.8px;background:#c2c2c2"></div>
<div class="r" style="left:885.9px;top:297.45px;width:11.8px;height:12.8px;background:#d3d3d3"></div>
<div class="t " style="left:900.3px;top:299.42px;font-size:7.6px;line-height:7.6px;color:#2e2e2e;letter-spacing:-0.25px;-webkit-text-stroke:0.35px #2e2e2e">QSCI1</div>
<div class="r" style="left:767.6px;top:313.7px;width:55.6px;height:12.8px;background:#c2c2c2"></div>
<div class="r" style="left:767.6px;top:313.7px;width:11.8px;height:12.8px;background:#d3d3d3"></div>
<div class="t " style="left:782.0px;top:315.67px;font-size:7.6px;line-height:7.6px;color:#2e2e2e;letter-spacing:-0.25px;-webkit-text-stroke:0.35px #2e2e2e">SIM</div>
<div class="r" style="left:826.8px;top:313.7px;width:55.6px;height:12.8px;background:#c2c2c2"></div>
<div class="r" style="left:826.8px;top:313.7px;width:11.8px;height:12.8px;background:#d3d3d3"></div>
<div class="t " style="left:841.1px;top:315.67px;font-size:7.6px;line-height:7.6px;color:#2e2e2e;letter-spacing:-0.25px;-webkit-text-stroke:0.35px #2e2e2e">SUPPLY</div>
<div class="r" style="left:885.9px;top:313.7px;width:55.6px;height:12.8px;background:#c2c2c2"></div>
<div class="r" style="left:885.9px;top:313.7px;width:11.8px;height:12.8px;background:#d3d3d3"></div>
<div class="t " style="left:900.3px;top:315.67px;font-size:7.6px;line-height:7.6px;color:#2e2e2e;letter-spacing:-0.25px;-webkit-text-stroke:0.35px #2e2e2e">TMRA</div>
<div class="t " style="left:783.3px;top:397.86px;font-size:12.8px;line-height:12.8px;color:#111;letter-spacing:-0.5px;-webkit-text-stroke:0.45px #111">MC56F80748VLH - LQFP 64</div>
<div class="r" style="left:0px;top:498px;width:936px;height:117px;background:#fff"></div>
<div class="r" style="left:0px;top:498px;width:936px;height:2px;background:#e6e6e6"></div>
<div class="r" style="left:0px;top:500px;width:936px;height:20.5px;background:#e8e8e8"></div>
<div class="r" style="left:0px;top:500px;width:90px;height:20.5px;background:#f5f5f5"></div>
<svg style="left:3px;top:506px" width="10" height="11"><rect x="0.8" y="0.8" width="8.4" height="9.4" rx="1" fill="#d9efe8" stroke="#3e917f" stroke-width="1.4"/><path d="M3 4 H7 L3 7.5 H7" stroke="#3e917f" stroke-width="1" fill="none"/></svg>
<div class="t " style="left:15.6px;top:506.99px;font-size:11.0px;line-height:11.0px;color:#3a3a3a;letter-spacing:-0.206px;">Routing Details</div>
<div class="r" style="left:0px;top:520.5px;width:936px;height:25px;background:#fafafa"></div>
<div class="r" style="left:4.6px;top:524.3px;width:25.4px;height:19px;background:#cce4f7;border:1px solid #8bb8e0"></div>
<div class="t " style="left:7.8px;top:529.69px;font-size:11.0px;line-height:11.0px;color:#303030;letter-spacing:-0.502px;">Pins</div>
<div class="r" style="left:34px;top:524.3px;width:39.6px;height:19px;background:#cce4f7;border:1px solid #8bb8e0"></div>
<div class="t " style="left:37.1px;top:529.69px;font-size:11.0px;line-height:11.0px;color:#303030;letter-spacing:-0.34px;">Signals</div>
<div class="r" style="left:77.5px;top:524.3px;width:859px;height:19.5px;background:#fff;border:1px solid #c8c8c8;border-right:none"></div>
<svg style="left:81px;top:528px" width="10" height="11"><circle cx="6" cy="4" r="3" fill="none" stroke="#555" stroke-width="1.3"/><path d="M4 6 L0.8 9.5" stroke="#555" stroke-width="1.8"/></svg>
<div class="t " style="left:94.0px;top:529.39px;font-size:11.0px;line-height:11.0px;color:#7a7a7a;letter-spacing:0.024px;">type filter text</div>
<div class="r" style="left:0px;top:546px;width:936px;height:1px;background:#d0d0d0"></div>
<div class="r" style="left:5px;top:547px;width:931px;height:68px;background:#fff;border-left:1px solid #d8d8d8"></div>
<div class="r" style="left:8px;top:550.5px;width:928px;height:20.5px;background:#bcd3eb"></div>
<div class="t " style="left:10.5px;top:556.49px;font-size:11.0px;line-height:11.0px;color:#303030;letter-spacing:-0.116px;">Routing Details for...</div>
<div class="r" style="left:136.6px;top:552px;width:21px;height:18.5px;background:#fff;border:1px solid #a8bcd0"></div>
<div class="t " style="left:144.0px;top:556.69px;font-size:11.0px;line-height:11.0px;color:#303030;">1</div>
<svg style="left:162.5px;top:556px" width="10" height="10"><circle cx="5" cy="5" r="5" fill="#1e9a7a"/><path d="M5 2.3 V7.7 M2.3 5 H7.7" stroke="#fff" stroke-width="1.6"/></svg>
<div class="r" style="left:177.5px;top:553px;width:12.5px;height:15px;border:1px solid #ccdbe9;background:#c5d9ee"></div>
<div class="r" style="left:193px;top:553px;width:12.5px;height:15px;border:1px solid #ccdbe9;background:#c5d9ee"></div>
<div class="r" style="left:209px;top:553px;width:12.5px;height:15px;border:1px solid #ccdbe9;background:#c5d9ee"></div>
<svg style="left:180px;top:556px" width="8" height="9"><path d="M1 1 L7 8 M7 1 L1 8" stroke="#aebfd0" stroke-width="1.3"/></svg>
<svg style="left:196px;top:558px" width="7" height="4"><path d="M0.5 3.5 L3.5 0.5 L6.5 3.5" stroke="#aebfd0" stroke-width="1" fill="none"/></svg>
<svg style="left:212px;top:558px" width="7" height="4"><path d="M0.5 0.5 L3.5 3.5 L6.5 0.5" stroke="#aebfd0" stroke-width="1" fill="none"/></svg>
<div class="t " style="left:14.0px;top:575.69px;font-size:11.0px;line-height:11.0px;color:#3a3a3a;letter-spacing:-0.625px;">#</div>
<div class="r" style="left:33.3px;top:571px;width:1px;height:44px;background:#ececec"></div>
<div class="t " style="left:38.7px;top:575.69px;font-size:11.0px;line-height:11.0px;color:#3a3a3a;letter-spacing:-0.394px;">Peripheral</div>
<div class="r" style="left:97.4px;top:571px;width:1px;height:44px;background:#ececec"></div>
<div class="t " style="left:103.0px;top:575.69px;font-size:11.0px;line-height:11.0px;color:#3a3a3a;letter-spacing:-0.23px;">Signal</div>
<div class="r" style="left:151px;top:571px;width:1px;height:44px;background:#ececec"></div>
<div class="t " style="left:155.8px;top:575.69px;font-size:11.0px;line-height:11.0px;color:#3a3a3a;letter-spacing:0.073px;">Arrow</div>
<div class="r" style="left:189.5px;top:571px;width:1px;height:44px;background:#ececec"></div>
<div class="t " style="left:193.5px;top:575.69px;font-size:11.0px;line-height:11.0px;color:#3a3a3a;letter-spacing:-0.007px;">Routed pin/signal</div>
<div class="r" style="left:290px;top:571px;width:1px;height:44px;background:#ececec"></div>
<div class="t " style="left:294.0px;top:575.69px;font-size:11.0px;line-height:11.0px;color:#3a3a3a;letter-spacing:-1.284px;">Label</div>
<div class="r" style="left:359.5px;top:571px;width:1px;height:44px;background:#ececec"></div>
<div class="t " style="left:363.3px;top:575.69px;font-size:11.0px;line-height:11.0px;color:#3a3a3a;letter-spacing:0.05px;">Identifier</div>
<div class="r" style="left:409.5px;top:571px;width:1px;height:44px;background:#ececec"></div>
<div class="t " style="left:413.6px;top:575.69px;font-size:11.0px;line-height:11.0px;color:#3a3a3a;letter-spacing:-0.023px;">Direction</div>
<div class="r" style="left:461.5px;top:571px;width:1px;height:44px;background:#ececec"></div>
<div class="t " style="left:464.0px;top:575.69px;font-size:11.0px;line-height:11.0px;color:#3a3a3a;letter-spacing:-0.175px;">GPIO initial state</div>
<div class="r" style="left:547.5px;top:571px;width:1px;height:44px;background:#ececec"></div>
<div class="t " style="left:551.6px;top:575.69px;font-size:11.0px;line-height:11.0px;color:#3a3a3a;letter-spacing:-0.13px;">GPIO interrupt</div>
<div class="r" style="left:625.3px;top:571px;width:1px;height:44px;background:#ececec"></div>
<div class="t " style="left:628.9px;top:575.69px;font-size:11.0px;line-height:11.0px;color:#3a3a3a;letter-spacing:-0.351px;">Slew rate</div>
<div class="r" style="left:676px;top:571px;width:1px;height:44px;background:#ececec"></div>
<div class="t " style="left:679.7px;top:575.69px;font-size:11.0px;line-height:11.0px;color:#3a3a3a;letter-spacing:-0.054px;">Open drain</div>
<div class="r" style="left:737.2px;top:571px;width:1px;height:44px;background:#ececec"></div>
<div class="t " style="left:741.3px;top:575.69px;font-size:11.0px;line-height:11.0px;color:#3a3a3a;letter-spacing:0.008px;">Drive strength</div>
<div class="r" style="left:813.5px;top:571px;width:1px;height:44px;background:#ececec"></div>
<div class="t " style="left:817.6px;top:575.69px;font-size:11.0px;line-height:11.0px;color:#3a3a3a;letter-spacing:-0.349px;">Pull select</div>
<div class="r" style="left:868px;top:571px;width:1px;height:44px;background:#ececec"></div>
<div class="t " style="left:872.0px;top:575.69px;font-size:11.0px;line-height:11.0px;color:#3a3a3a;letter-spacing:-0.185px;">Pull enable</div>
<svg style="left:378px;top:571px" width="8" height="4"><path d="M0.5 3.5 L4 0.5 L7.5 3.5" stroke="#999" stroke-width="0.9" fill="none"/></svg>
<div class="r" style="left:34.5px;top:590px;width:893.5px;height:17.5px;background:#ffff00"></div>
<div class="r" style="left:928px;top:571px;width:1px;height:44px;background:#ececec"></div>
<div class="t " style="left:14.0px;top:594.99px;font-size:11.0px;line-height:11.0px;color:#3a3a3a;letter-spacing:-0.375px;-webkit-text-stroke-width:0.35px">58</div>
<div class="t " style="left:37.7px;top:594.99px;font-size:11.0px;line-height:11.0px;color:#48480a;letter-spacing:-0.927px;-webkit-text-stroke-width:0.35px">GPIOF</div>
<div class="t " style="left:103.0px;top:594.99px;font-size:11.0px;line-height:11.0px;color:#48480a;letter-spacing:-0.436px;-webkit-text-stroke-width:0.35px">GPIO, 6</div>
<div class="t " style="left:157.5px;top:594.99px;font-size:11.0px;line-height:11.0px;color:#cfcf60;-webkit-text-stroke-width:0.35px">-</div>
<div class="t " style="left:193.5px;top:594.99px;font-size:11.0px;line-height:11.0px;color:#48480a;letter-spacing:-0.459px;-webkit-text-stroke-width:0.35px">[58] GPIOF6</div>
<div class="t " style="left:294.0px;top:594.99px;font-size:11.0px;line-height:11.0px;color:#48480a;letter-spacing:-0.193px;-webkit-text-stroke-width:0.35px">U18[8]/J2[...</div>
<div class="t " style="left:363.3px;top:594.99px;font-size:11.0px;line-height:11.0px;color:#48480a;letter-spacing:-0.066px;-webkit-text-stroke-width:0.35px">Not Sp...</div>
<div class="t i" style="left:413.6px;top:594.99px;font-size:11.0px;line-height:11.0px;color:#48480a;letter-spacing:-0.066px;-webkit-text-stroke-width:0.35px">Not Sp...</div>
<div class="t i" style="left:464.0px;top:594.99px;font-size:11.0px;line-height:11.0px;color:#48480a;letter-spacing:1.034px;-webkit-text-stroke-width:0.35px">n/a</div>
<div class="t i" style="left:551.6px;top:594.99px;font-size:11.0px;line-height:11.0px;color:#48480a;letter-spacing:0.634px;-webkit-text-stroke-width:0.35px">n/a</div>
<div class="t i" style="left:628.9px;top:594.99px;font-size:11.0px;line-height:11.0px;color:#48480a;letter-spacing:-0.386px;-webkit-text-stroke-width:0.35px">Slow</div>
<div class="t i" style="left:679.7px;top:594.99px;font-size:11.0px;line-height:11.0px;color:#48480a;letter-spacing:-0.014px;-webkit-text-stroke-width:0.35px">Disabled</div>
<div class="t i" style="left:741.3px;top:594.99px;font-size:11.0px;line-height:11.0px;color:#48480a;letter-spacing:-0.296px;-webkit-text-stroke-width:0.35px">Low</div>
<div class="t i" style="left:817.6px;top:594.99px;font-size:11.0px;line-height:11.0px;color:#48480a;letter-spacing:-0.096px;-webkit-text-stroke-width:0.35px">Pullup</div>
<div class="t i" style="left:872.0px;top:594.99px;font-size:11.0px;line-height:11.0px;color:#48480a;letter-spacing:-0.077px;-webkit-text-stroke-width:0.35px">Disabled</div>
<div class="r" style="left:5px;top:586.7px;width:287px;height:24px;border:4px solid #fb0a0a;border-radius:2px"></div>
<div class="r" style="left:135px;top:159px;width:406px;height:322px;box-shadow:0 3px 16px rgba(0,0,0,.30)"></div>
<div class="r" style="left:135px;top:158.7px;width:406px;height:322.3px;background:#f0f0f0;border-left:1px solid #858585"></div>
<div class="r" style="left:135px;top:158.7px;width:405px;height:27px;background:#fff;border:1px solid #707070;border-bottom:none"></div>
<div class="r" style="left:143px;top:165px;width:14.2px;height:14.2px;background:#7ea699;border:1.8px solid #1f5846;border-radius:2.5px"></div>
<svg style="left:143px;top:165px" width="14" height="14"><path d="M3.2 2.8 L11 11.4 M11 2.8 L3.2 11.4" stroke="#173f33" stroke-width="2.3"/></svg>
<div class="t " style="left:162.0px;top:167.19px;font-size:11.0px;line-height:11.0px;color:#303030;letter-spacing:-0.464px;">Peripheral GPIOF</div>
<div class="r" style="left:432px;top:172px;width:9px;height:1px;background:#c8c8c8"></div>
<div class="r" style="left:472px;top:167.8px;width:9.4px;height:9px;border:1.2px solid #333"></div>
<svg style="left:513.5px;top:168px" width="10" height="10"><path d="M0.5 0.5 L9.5 9.5 M9.5 0.5 L0.5 9.5" stroke="#333" stroke-width="1.1"/></svg>
<div class="t " style="left:138.7px;top:191.19px;font-size:11.0px;line-height:11.0px;color:#3a3a3a;letter-spacing:-0.132px;">All GPIOF signals for routing:</div>
<div class="r" style="left:137.5px;top:206.5px;width:400.5px;height:175px;background:#fff;border:1px solid #b5b5b5"></div>
<div class="r" style="left:139px;top:313.4px;width:397.5px;height:16.5px;background:#cce4f7"></div>
<div class="r" style="left:142px;top:211.8px;width:10px;height:10px;background:#f4f4f4;border:1px solid #d4d4d4"></div>
<div class="t i" style="left:153.5px;top:211.99px;font-size:11.0px;line-height:11.0px;color:#3a3a3a;letter-spacing:-0.369px;">GPIO, 0 - [36] GPIOF0/XB_IN6/OPAMPB_OUT; default</div>
<div class="r" style="left:142px;top:229.3px;width:10px;height:10px;background:#f4f4f4;border:1px solid #d4d4d4"></div>
<div class="t i" style="left:153.5px;top:229.49px;font-size:11.0px;line-height:11.0px;color:#3a3a3a;letter-spacing:-0.284px;">GPIO, 1 - [50] GPIOF1/CLKO1/XB_IN7/ANA4d; default</div>
<div class="r" style="left:142px;top:246.8px;width:10px;height:10px;background:#f4f4f4;border:1px solid #d4d4d4"></div>
<div class="t i" style="left:153.5px;top:246.99px;font-size:11.0px;line-height:11.0px;color:#3a3a3a;letter-spacing:-0.392px;">GPIO, 2 - [39] GPIOF2/ANA4a/XB_OUT6/LP_SDA0; default</div>
<div class="r" style="left:142px;top:264.3px;width:10px;height:10px;background:#f4f4f4;border:1px solid #d4d4d4"></div>
<div class="t i" style="left:153.5px;top:264.49px;font-size:11.0px;line-height:11.0px;color:#3a3a3a;letter-spacing:-0.426px;">GPIO, 3 - [40] GPIOF3/ANB4a/XB_OUT7/LP_SCL0; default</div>
<div class="r" style="left:142px;top:281.8px;width:10px;height:10px;background:#f4f4f4;border:1px solid #d4d4d4"></div>
<div class="t i" style="left:153.5px;top:281.99px;font-size:11.0px;line-height:11.0px;color:#3a3a3a;letter-spacing:-0.41px;">GPIO, 4 - [41] GPIOF4/TXD1/XB_OUT8/PWMA_0X/PWMA_FAULT6; default</div>
<div class="r" style="left:142px;top:299.3px;width:10px;height:10px;background:#f4f4f4;border:1px solid #d4d4d4"></div>
<div class="t i" style="left:153.5px;top:299.49px;font-size:11.0px;line-height:11.0px;color:#3a3a3a;letter-spacing:-0.421px;">GPIO, 5 - [42] GPIOF5/RXD1/XB_OUT9/PWMA_1X/PWMA_FAULT7; default</div>
<svg style="left:142px;top:316px" width="10" height="10"><rect x="0" y="0" width="10" height="10" fill="#22cc22" stroke="#1a8f1a" stroke-width="1"/><path d="M2 5 L4.2 7.2 L8.2 2.8" stroke="#123" stroke-width="1.5" fill="none"/></svg>
<div class="t i" style="left:153.5px;top:316.99px;font-size:11.0px;line-height:11.0px;color:#3a3a3a;letter-spacing:-0.315px;">GPIO, 6 - [58] GPIOF6/ANB4f/PWMA_3X/XB_IN2; default</div>
<div class="r" style="left:142px;top:334.3px;width:10px;height:10px;background:#f4f4f4;border:1px solid #d4d4d4"></div>
<div class="t i" style="left:153.5px;top:334.49px;font-size:11.0px;line-height:11.0px;color:#3a3a3a;letter-spacing:-0.299px;">GPIO, 7 - [59] GPIOF7/ANA4f/CMPC_O/XB_IN3; default</div>
<div class="r" style="left:142px;top:351.8px;width:10px;height:10px;background:#f4f4f4;border:1px solid #d4d4d4"></div>
<div class="t i" style="left:153.5px;top:351.99px;font-size:11.0px;line-height:11.0px;color:#3a3a3a;letter-spacing:-0.379px;">GPIO, 8 - [6] GPIOF8/RXD0/XB_OUT10/PWMA_2X; default</div>
<div class="r" style="left:134.6px;top:309.2px;width:64px;height:23.7px;border:3.9px solid #fb0a0a;border-radius:2px"></div>
<div class="r" style="left:142.3px;top:389px;width:48.7px;height:19px;background:#e1e1e1;border:1px solid #b8b8b8"></div>
<div class="t " style="left:145.5px;top:393.69px;font-size:11.0px;line-height:11.0px;color:#3a3a3a;letter-spacing:-0.115px;">Route All</div>
<div class="r" style="left:195.4px;top:389px;width:59px;height:19px;background:#e1e1e1;border:1px solid #b8b8b8"></div>
<div class="t " style="left:198.4px;top:393.69px;font-size:11.0px;line-height:11.0px;color:#3a3a3a;letter-spacing:0.017px;">Unroute All</div>
<div class="t " style="left:139.0px;top:418.19px;font-size:11.0px;line-height:11.0px;color:#3a3a3a;letter-spacing:-0.127px;">Make sure pin/signal assignment is correct in the Routing Details view.</div>
<div class="r" style="left:438px;top:450px;width:91.5px;height:15.5px;background:#e1e1e1;border:1px solid #c4c4c4"></div>
<div class="t " style="left:471.7px;top:453.19px;font-size:11.0px;line-height:11.0px;color:#3a3a3a;letter-spacing:-0.199px;">Done</div>
<div class="r" style="left:427.3px;top:445.6px;width:111.7px;height:23.8px;border:4px solid #fb0a0a;border-radius:2px"></div></body></html>
